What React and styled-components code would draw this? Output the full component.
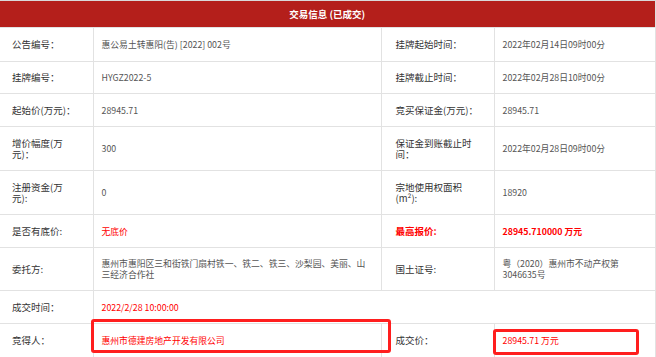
import React from 'react'
import styled, { createGlobalStyle } from 'styled-components'

const GlobalStyle = createGlobalStyle`
  html, body {
    margin: 0;
    padding: 0;
    background: #fff;
  }
  body {
    font-family: "Noto Sans CJK SC", "Noto Sans", sans-serif;
  }
`

const Root = styled.div`
  position: relative;
  width: 656px;
  height: 357px;
  overflow: hidden;
  border-top: 1px solid #d9d9d9;
  box-sizing: border-box;
`

const Table = styled.table`
  width: 655px;
  border-collapse: collapse;
  table-layout: fixed;
  border-right: 1px solid #dcdcdc;
`

const Header = styled.th`
  height: 26px;
  padding: 0;
  background: #b41f1b;
  color: #fff;
  font-size: 9.5px;
  font-weight: bold;
  text-align: center;
`

const Row = styled.tr`
  height: ${props => props.h}px;
`

const Label = styled.td`
  border: 1px solid #e2e2e2;
  border-left: none;
  padding: ${props => (props.wide ? '0 14px' : '0 16px 0 12px')};
  font-size: 9.5px;
  line-height: 11px;
  color: ${props => (props.red ? '#f00' : '#333')};
  font-weight: ${props => (props.red ? 'bold' : 'normal')};
  vertical-align: middle;
`

const Value = styled.td`
  border: 1px solid #e2e2e2;
  padding: 0 8px;
  font-size: 8.8px;
  line-height: 11px;
  color: ${props => (props.red ? '#f00' : '#555')};
  font-weight: ${props => (props.bold ? 'bold' : 'normal')};
  vertical-align: middle;
`

const Mark = styled.div`
  position: absolute;
  border: 3px solid #ff1e1e;
  border-radius: 3px;
  box-sizing: border-box;
  left: ${props => props.x}px;
  top: ${props => props.y}px;
  width: ${props => props.w}px;
  height: ${props => props.hgt}px;
  pointer-events: none;
`

const App = () => {
  return (
    <Root>
      <GlobalStyle />
      <Table>
        <colgroup>
          <col style={{ width: 93 }} />
          <col style={{ width: 288 }} />
          <col style={{ width: 113 }} />
          <col style={{ width: 161 }} />
        </colgroup>
        <thead>
          <tr>
            <Header colSpan={4}>交易信息 (已成交)</Header>
          </tr>
        </thead>
        <tbody>
          <Row h={34}>
            <Label>公告编号：</Label>
            <Value>惠公易土转惠阳(告) [2022] 002号</Value>
            <Label wide>挂牌起始时间：</Label>
            <Value>2022年02月14日09时00分</Value>
          </Row>
          <Row h={32}>
            <Label>挂牌编号：</Label>
            <Value>HYGZ2022-5</Value>
            <Label wide>挂牌截止时间：</Label>
            <Value>2022年02月28日10时00分</Value>
          </Row>
          <Row h={33}>
            <Label>起始价(万元)：</Label>
            <Value>28945.71</Value>
            <Label wide>竞买保证金(万元)：</Label>
            <Value>28945.71</Value>
          </Row>
          <Row h={44}>
            <Label>增价幅度(万元)：</Label>
            <Value>300</Value>
            <Label wide>保证金到账截止时间：</Label>
            <Value>2022年02月28日09时00分</Value>
          </Row>
          <Row h={44}>
            <Label>注册资金(万元):</Label>
            <Value>0</Value>
            <Label wide>宗地使用权面积(m²):</Label>
            <Value>18920</Value>
          </Row>
          <Row h={33}>
            <Label>是否有底价:</Label>
            <Value red>无底价</Value>
            <Label wide red>最高报价:</Label>
            <Value red bold>28945.710000 万元</Value>
          </Row>
          <Row h={43}>
            <Label>委托方:</Label>
            <Value>惠州市惠阳区三和街铁门扇村铁一、铁二、铁三、沙梨园、美丽、山三经济合作社</Value>
            <Label wide>国土证号:</Label>
            <Value>粤（2020）惠州市不动产权第3046635号</Value>
          </Row>
          <Row h={33}>
            <Label>成交时间：</Label>
            <Value red colSpan={3}>2022/2/28 10:00:00</Value>
          </Row>
          <Row h={34}>
            <Label>竞得人：</Label>
            <Value red>惠州市德建房地产开发有限公司</Value>
            <Label wide>成交价：</Label>
            <Value red>28945.71 万元</Value>
          </Row>
        </tbody>
      </Table>
      <Mark x={91} y={318} w={300} hgt={34} />
      <Mark x={493} y={328} w={146} hgt={26} />
    </Root>
  )
}

export default App
